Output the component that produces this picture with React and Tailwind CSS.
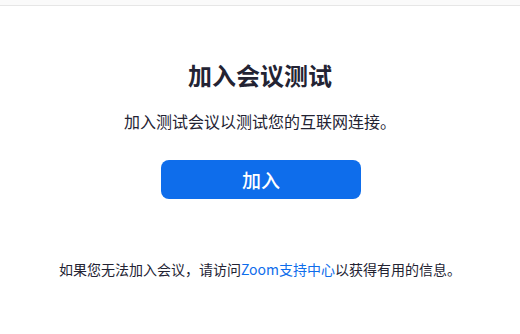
import React from 'react'

const App = () => {
  return (
    <div
      className="w-[520px] h-[334px] bg-white overflow-hidden"
      style={{ fontFamily: '"Noto Sans CJK SC", "Noto Sans", sans-serif' }}
    >
      {/* top strip */}
      <div className="h-[6px] bg-[#fafafa] border-b border-[#e6e6e6]"></div>

      <div className="flex flex-col items-center pt-[53px]">
        <h1 className="text-[24px] leading-[32px] font-bold text-[#232333]">
          加入会议测试
        </h1>

        <p className="mt-[18px] text-[16px] leading-[24px] text-[#232333]">
          加入测试会议以测试您的互联网连接。
        </p>

        <button className="mt-[27px] ml-[2px] w-[200px] h-[39px] rounded-[8px] bg-[#0e6deb] text-white text-[19px] font-medium leading-none flex items-center justify-center">
          加入
        </button>

        <p className="mt-[60px] text-[14px] leading-[20px] text-[#232333]">
          如果您无法加入会议，请访问<span className="text-[#0e6deb]">Zoom支持中心</span>以获得有用的信息。
        </p>
      </div>
    </div>
  )
}

export default App
